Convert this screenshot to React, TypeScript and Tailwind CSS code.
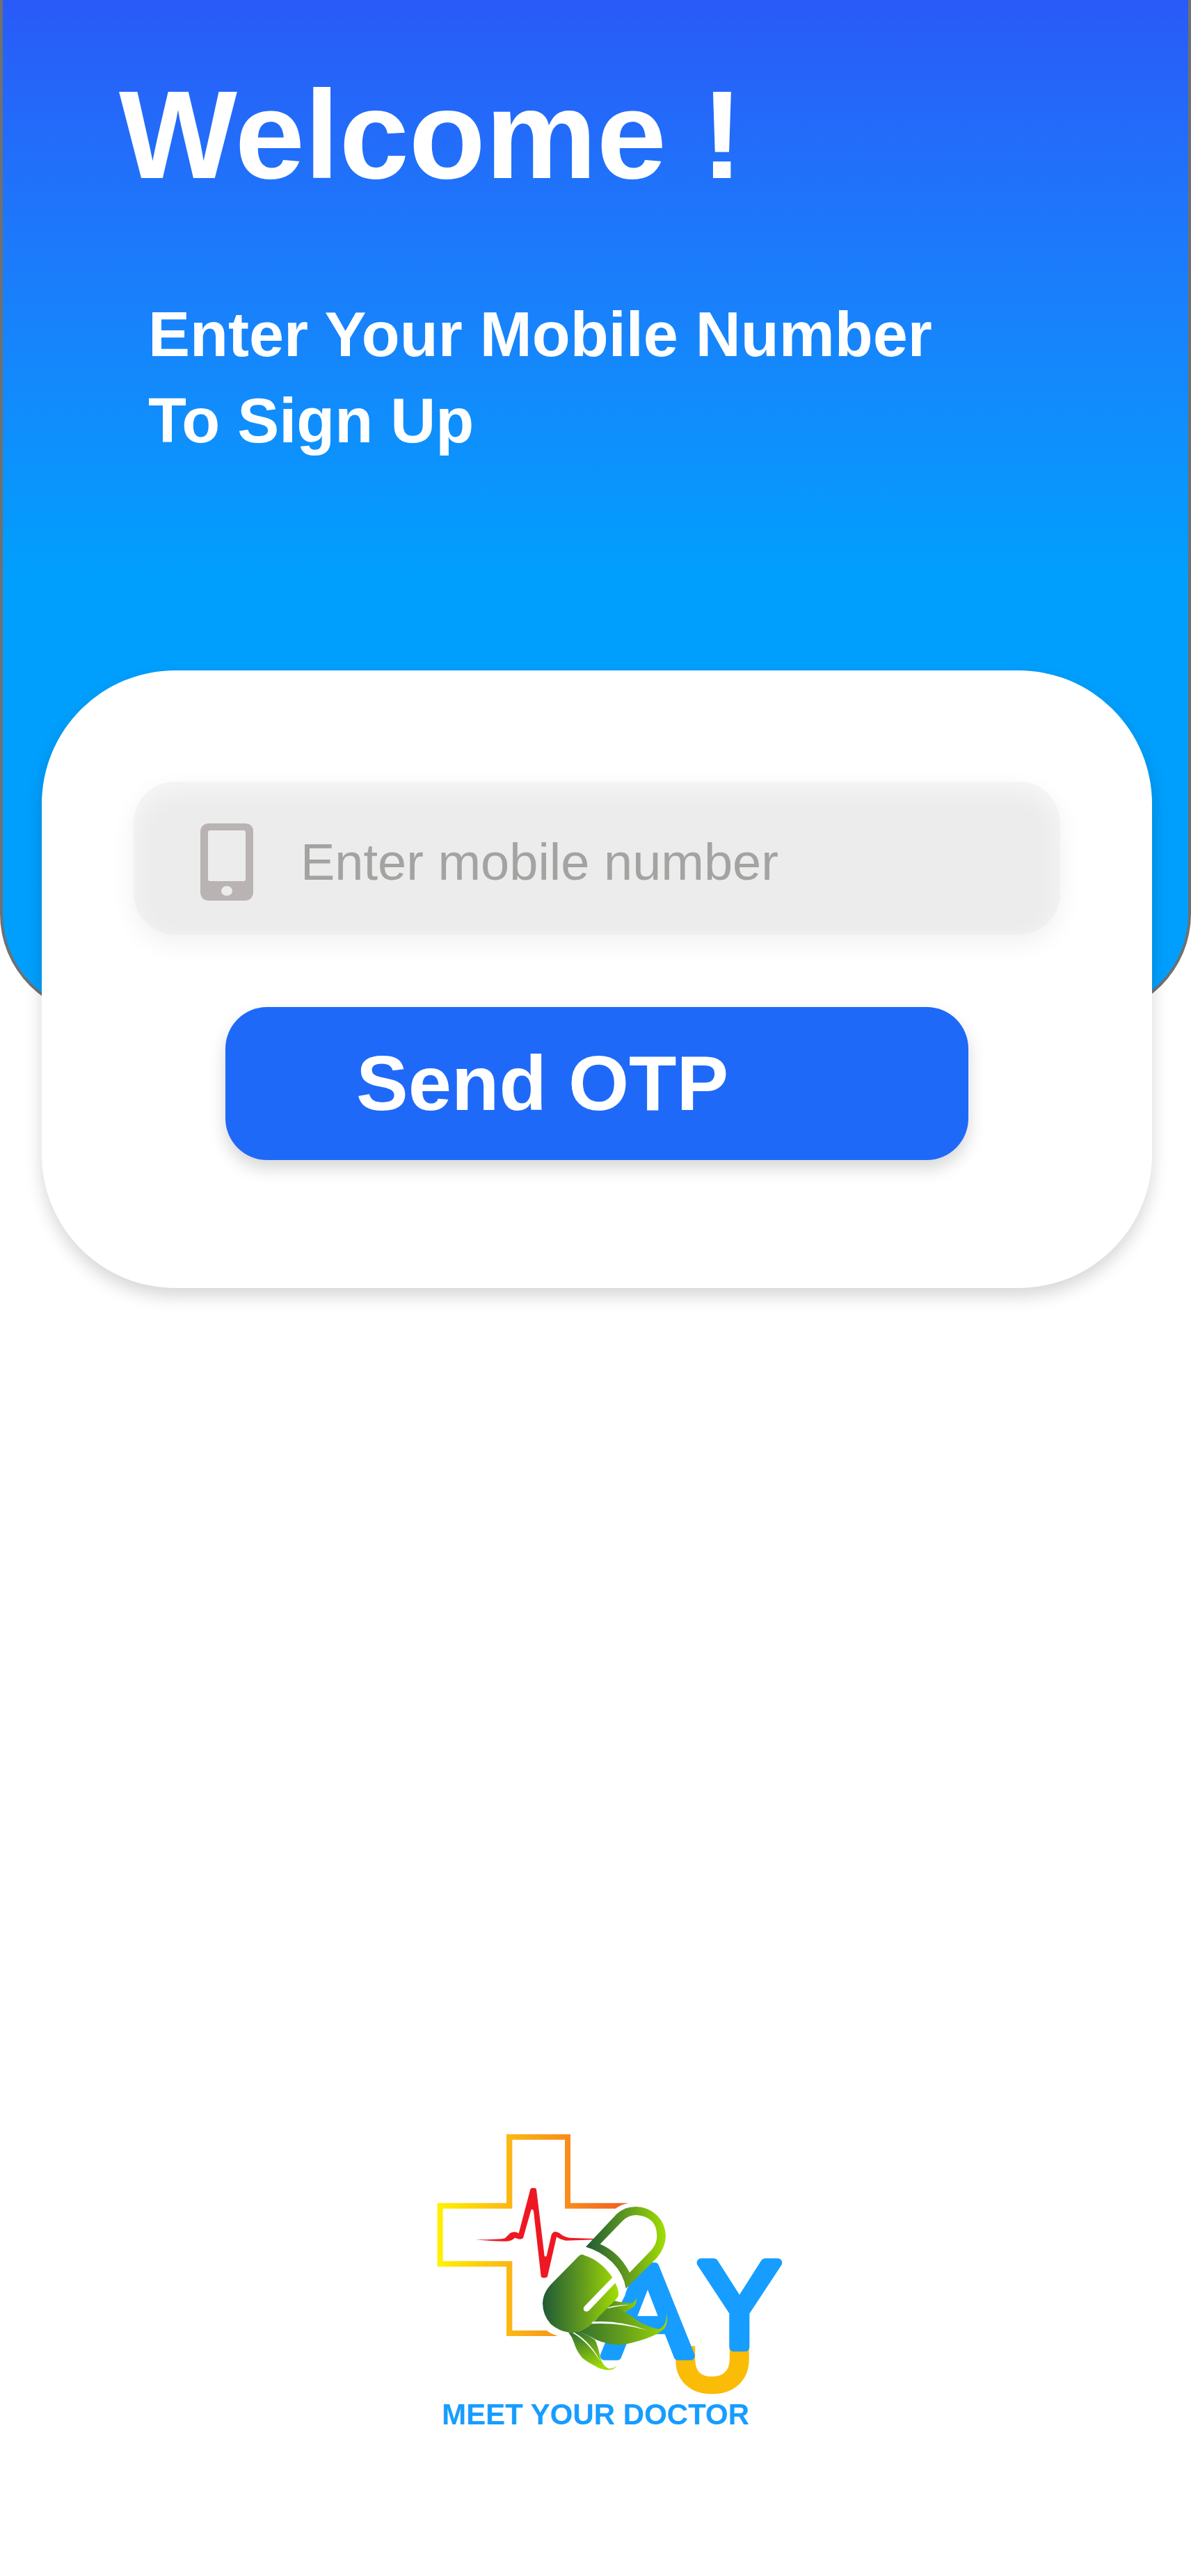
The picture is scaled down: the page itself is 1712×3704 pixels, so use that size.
function PhoneIcon() {
  return (
    <svg viewBox="0 0 76 111" className="w-[76px] shrink-0" aria-hidden="true">
      <path
        fill="#b9b3b3"
        fillRule="evenodd"
        d="M11 0H65Q76 1 76 11V100Q75 110 65 111H11Q1 110 0 100V11Q1 1 11 0ZM14 10Q11 10 11 13V80Q11 83 14 83H62Q65 83 65 80V13Q65 10 62 10ZM38 90A8 7 0 1 0 38 104A8 7 0 1 0 38 90Z"
      />
    </svg>
  );
}

function Logo() {
  return (
    <svg
      viewBox="0 0 1680 1230"
      className="block w-[560px]"
      role="img"
      aria-label="AYU"
    >
      <defs>
        <linearGradient id="cross" gradientUnits="userSpaceOnUse" x1="86" y1="0" x2="911" y2="0">
          <stop offset="0" stopColor="#fff200" />
          <stop offset="0.38" stopColor="#fbb615" />
          <stop offset="0.68" stopColor="#f98d1b" />
          <stop offset="1" stopColor="#f15a24" />
        </linearGradient>
        <linearGradient id="shell" gradientUnits="userSpaceOnUse" x1="306" y1="0" x2="651" y2="0">
          <stop offset="0" stopColor="#1f5a36" />
          <stop offset="0.5" stopColor="#5f981f" />
          <stop offset="1" stopColor="#a2de02" />
        </linearGradient>
        <linearGradient id="pill" gradientUnits="userSpaceOnUse" x1="120" y1="0" x2="447" y2="0">
          <stop offset="0" stopColor="#1f5a36" />
          <stop offset="0.5" stopColor="#5f981f" />
          <stop offset="1" stopColor="#a2de02" />
        </linearGradient>
        <linearGradient id="leaf" gradientUnits="userSpaceOnUse" x1="250" y1="0" x2="660" y2="0">
          <stop offset="0" stopColor="#2c6a30" />
          <stop offset="0.5" stopColor="#629c1d" />
          <stop offset="1" stopColor="#9ad606" />
        </linearGradient>
        <linearGradient id="leafLow" gradientUnits="userSpaceOnUse" x1="280" y1="700" x2="350" y2="860">
          <stop offset="0" stopColor="#377630" />
          <stop offset="1" stopColor="#9fdb04" />
        </linearGradient>
        <linearGradient id="leafSmall" gradientUnits="userSpaceOnUse" x1="395" y1="0" x2="525" y2="0">
          <stop offset="0" stopColor="#4a872a" />
          <stop offset="1" stopColor="#8fcb0c" />
        </linearGradient>
        <clipPath id="lower">
          <rect x="1060" y="1000" width="440" height="230" />
        </clipPath>
      </defs>

      <path
        fill="url(#cross)"
        d="M911 383H660V86H384V383H86V658H384V957H607Q580 950 557 933H409V634H110V407H409V110H636V407H854Q880 388 911 383Z"
      />
      <path
        fill="#ee1822"
        d="M252 541Q360 541 378 535Q392 520 400 513Q418 502 437 514L487 324Q488 318 499 318Q512 318 513 324L548 612Q552 615 557 612L578 520Q586 504 600 508Q614 512 620 519Q640 534 670 534L768 537V541L640 545Q618 542 600 529L561 700Q558 706 546 706Q535 706 533 700L501 418Q497 408 491 411L456 534Q450 540 440 539L420 533Q408 546 385 548Q330 549 252 541Z"
      />

      <g
        fontFamily="'Liberation Sans', Arial, sans-serif"
        textAnchor="middle"
        strokeLinejoin="round"
        strokeLinecap="round"
        strokeWidth="38"
      >
        <g clipPath="url(#lower)">
          <text x="1272" y="1183" fontSize="490" fill="#fbbc07" stroke="#fbbc07">U</text>
        </g>
        <text x="992" y="1041" fontSize="558" fill="#169dff" stroke="#169dff">A</text>
        <text x="1389" y="1004" fontSize="530" fill="#169dff" stroke="#169dff">Y</text>
      </g>

      <g transform="translate(420 240)">
        <path
          fill="#fff"
          d="M306 332L368 320L495 443L479 512Q482 550 450 575L420 560V460Z"
        />
        <path fill="#fff" d="M368 320L465 220Q525 180 600 240L613 285L590 345L495 443Z" />
        <path
          fill="url(#shell)"
          fillRule="evenodd"
          d="M306 332L440 190Q475 158 523 159A128 128 0 0 1 651 285Q650 335 612 380L479 512Q470 450 420 398Q370 350 306 332ZM368 320L465 220Q490 195 525 195Q612 202 613 285Q612 320 590 345L495 443Q450 355 368 320Z"
        />
        <path
          fill="url(#leafSmall)"
          d="M425 563Q460 573 505 575Q522 568 524 548Q529 580 508 595Q490 605 474 616Q440 600 390 602Z"
        />
        <path
          fill="url(#leaf)"
          d="M272 698Q330 680 380 608L400 590Q450 595 474 616Q505 628 535 655Q580 680 620 687Q655 675 655 618Q663 660 645 685Q620 710 565 728Q500 750 455 755Q400 755 350 733Q310 708 272 698Z"
        />
        <path
          fill="url(#leafLow)"
          d="M232 702L268 696Q310 708 345 733Q358 755 370 815Q383 850 405 857Q425 858 440 845Q428 865 395 863Q365 858 345 845Q310 828 290 810Q265 780 255 745Q247 720 232 702Z"
        />
        <path
          fill="url(#pill)"
          d="M286 366Q292 364 300 369Q370 390 421 464L301 588Q292 600 300 608Q311 615 321 606L433 488Q448 515 447 540Q445 550 435 560L320 675Q285 702 235 702Q190 695 155 665Q120 625 120 575Q122 530 155 495L275 373Q280 367 286 366Z"
        />
        <g fill="#fff">
          <path d="M336 655Q450 647 573 692Q450 657 330 664Z" />
          <path d="M402 594Q440 581 495 583Q440 588 400 598Z" />
          <path d="M248 702H257Q330 745 372 832Q320 745 248 702Z" />
        </g>
      </g>
    </svg>
  );
}

export default function App() {
  return (
    <main className="flex min-h-screen flex-col bg-white font-['Liberation_Sans',Arial,sans-serif]">
      <header className="rounded-b-[146px] border-4 border-t-0 border-[#707070] bg-linear-to-b from-[#295af8] to-[#009ffd] to-[830px] pt-[104px] pb-[789px] text-white">
        <h1 className="pl-[167px] text-[180px] leading-none font-bold">Welcome !</h1>
        <p className="mt-[135px] pl-[209px] text-[90px] leading-[124px] font-bold">
          Enter Your Mobile Number
          <br />
          To Sign Up
        </p>
      </header>

      <form
        className="relative -mt-[496px] mr-14 ml-15 rounded-[192px] bg-white px-[132px] pt-40 pb-[184px] shadow-[0_12px_24px_rgba(0,0,0,0.16)]"
        onSubmit={(event) => event.preventDefault()}
      >
        <label className="flex h-[220px] items-center gap-[68px] rounded-[60px] bg-[#ececec] px-24 pt-2.5 shadow-[0_12px_36px_rgba(0,0,0,0.06),inset_0_12px_36px_rgba(255,255,255,0.6)]">
          <PhoneIcon />
          <input
            type="tel"
            aria-label="Mobile number"
            placeholder="Enter mobile number"
            className="min-w-0 flex-1 bg-transparent text-[74px] text-[#a3a3a2] outline-none placeholder:text-[#a3a3a2]"
          />
        </label>
        <div className="mt-[104px] px-[132px]">
          <button
            type="submit"
            className="block h-[220px] w-full rounded-[60px] bg-[#1f69f8] pl-[188px] text-left text-[112px] leading-none font-bold text-white shadow-[0_12px_24px_rgba(0,0,0,0.16)]"
          >
            Send OTP
          </button>
        </div>
      </form>

      <footer className="mt-auto flex justify-center pb-[210px] pl-12">
        <div>
          <Logo />
          <p className="pl-[35px] text-[42px] leading-[44px] font-bold text-[#169dff]">
            MEET YOUR DOCTOR
          </p>
        </div>
      </footer>
    </main>
  );
}
